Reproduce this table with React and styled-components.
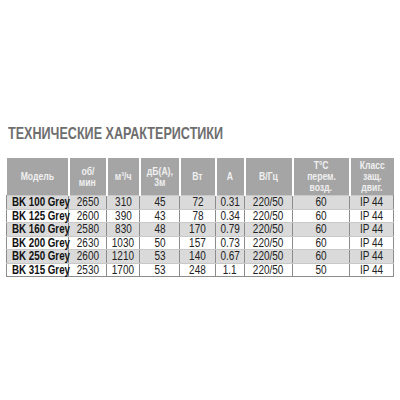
import React from 'react';
import styled, { createGlobalStyle } from 'styled-components';

const GlobalStyle = createGlobalStyle`
  html, body {
    margin: 0;
    padding: 0;
    background: #ffffff;
  }
  body {
    width: 400px;
    height: 400px;
    overflow: hidden;
    font-family: "Liberation Sans", Arial, sans-serif;
  }
`;

const Page = styled.div`
  padding: 125px 7px 0 6px;
`;

const Title = styled.h2`
  margin: 0 0 16px 2px;
  font-size: 17px;
  line-height: 17px;
  font-weight: 700;
  color: #6e6e6e;
  white-space: nowrap;
`;

// narrow face isn't installed, so squeeze the Arial-width glyphs horizontally
const Squeeze = styled.span`
  display: inline-block;
  white-space: nowrap;
  transform: scaleX(${p => p.$k || 0.8});
  transform-origin: ${p => p.$origin || 'center'};
`;

const Table = styled.table`
  width: 387px;
  table-layout: fixed;
  border-collapse: collapse;
`;

const Col = styled.col`
  width: ${p => p.$w}px;
`;

const Head = styled.th`
  height: 37px;
  padding: 0;
  background: #a5a5a5;
  color: #f0f0f0;
  font-size: 10.5px;
  line-height: 11px;
  font-weight: 700;
  text-align: center;
  vertical-align: middle;
  white-space: nowrap;
  border-left: 2px solid #ffffff;
  &:first-child {
    border-left: none;
  }
`;

const Row = styled.tr`
  height: 13.5px;
  background: ${p => (p.$shaded ? '#dadada' : '#ffffff')};
`;

const Cell = styled.td`
  padding: 0;
  font-size: 12.5px;
  line-height: 12px;
  color: #222222;
  text-align: center;
  white-space: nowrap;
  border: 1px solid #8c8c8c;
  border-top-color: #c8c8c8;
  border-bottom-color: #c8c8c8;
  tr:last-child > & {
    border-bottom-color: #8c8c8c;
  }
`;

const ModelCell = styled(Cell)`
  text-align: left;
  padding-left: 5px;
  font-weight: 700;
  color: #111111;
`;

const widths = [62, 38, 33, 40, 36, 29, 48, 57, 44];

const headers = [
  ['Модель'],
  ['об/', 'мин'],
  ['м³/ч'],
  ['дБ(А),', '3м'],
  ['Вт'],
  ['А'],
  ['В/Гц'],
  ['Т°С', 'перем.', 'возд.'],
  ['Класс', 'защ.', 'двиг.'],
];

const rows = [
  ['BK 100 Grey', '2650', '310', '45', '72', '0.31', '220/50', '60', 'IP 44'],
  ['BK 125 Grey', '2600', '390', '43', '78', '0.34', '220/50', '60', 'IP 44'],
  ['BK 160 Grey', '2580', '830', '48', '170', '0.79', '220/50', '60', 'IP 44'],
  ['BK 200 Grey', '2630', '1030', '50', '157', '0.73', '220/50', '60', 'IP 44'],
  ['BK 250 Grey', '2600', '1210', '53', '140', '0.67', '220/50', '60', 'IP 44'],
  ['BK 315 Grey', '2530', '1700', '53', '248', '1.1', '220/50', '50', 'IP 44'],
];

export default function App() {
  return (
    <>
      <GlobalStyle />
      <Page>
        <Title>
          <Squeeze $k={0.74} $origin="left">ТЕХНИЧЕСКИЕ ХАРАКТЕРИСТИКИ</Squeeze>
        </Title>
        <Table>
          <colgroup>
            {widths.map((w, i) => (
              <Col key={i} $w={w} />
            ))}
          </colgroup>
          <thead>
            <tr>
              {headers.map((lines, i) => (
                <Head key={i}>
                  {lines.map((l, j) => (
                    <React.Fragment key={j}>
                      {j > 0 && <br />}
                      <Squeeze $k={0.82}>{l}</Squeeze>
                    </React.Fragment>
                  ))}
                </Head>
              ))}
            </tr>
          </thead>
          <tbody>
            {rows.map((r, i) => (
              <Row key={i} $shaded={i % 2 === 0}>
                <ModelCell>
                  <Squeeze $k={0.78} $origin="left">{r[0]}</Squeeze>
                </ModelCell>
                {r.slice(1).map((v, j) => (
                  <Cell key={j}>
                    <Squeeze>{v}</Squeeze>
                  </Cell>
                ))}
              </Row>
            ))}
          </tbody>
        </Table>
      </Page>
    </>
  );
}
